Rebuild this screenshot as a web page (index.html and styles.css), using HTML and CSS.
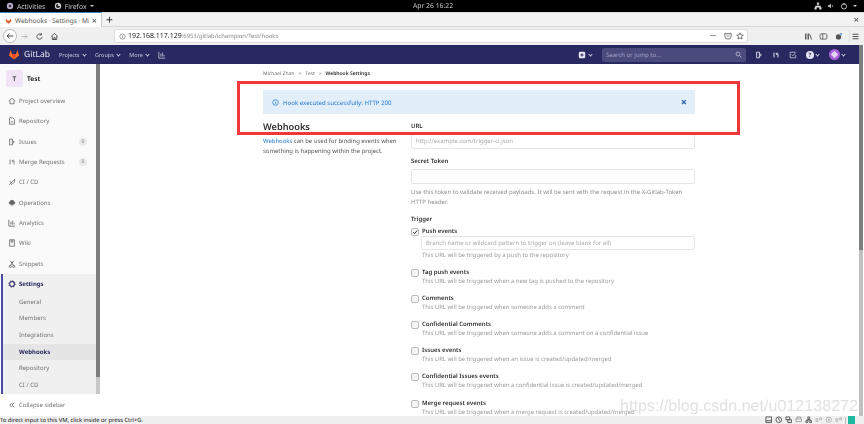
FILE: index.html
```html
<!DOCTYPE html>
<html lang="en">
<head>
    <meta charset="UTF-8">
    <title>Webhooks · Settings</title>
    <link rel="stylesheet" href="styles.css">
</head>
<body>
    <div class="os-bar">
        <div class="os-left">
            <svg class="os-icon" viewBox="0 0 10 10"><circle cx="5" cy="5" r="4" fill="#b9a6c9"/><circle cx="5" cy="5" r="1.600" fill="#333"/></svg>
            <span>Activities</span>
            <svg class="os-icon firefox" viewBox="0 0 10 10"><circle cx="5" cy="5" r="4" fill="#ccc"/><path d="M5 2.500a2.500 2.500 0 1 0 2.500 2.500H5z" fill="#222"/></svg>
            <span>Firefox</span>
            <span class="caret"></span>
        </div>
        <div class="os-clock">Apr 26 16:22</div>
        <div class="os-right">
            <svg class="os-icon" viewBox="0 0 10 10"><path d="M4 1h2v2H4zM1 7h2v2H1zM7 7h2v2H7zM5 3v2M2 7V5h6v2" fill="#ddd" stroke="#ddd" stroke-width=".7"/></svg>
            <svg class="os-icon" viewBox="0 0 10 10"><path d="M1 4h2l2-2v6L3 6H1z" fill="#ccc"/><path d="M6.500 3.500a2 2 0 0 1 0 3" stroke="#999" fill="none"/></svg>
            <svg class="os-icon" viewBox="0 0 10 10"><circle cx="5" cy="5.500" r="3.300" fill="none" stroke="#ddd"/><path d="M5 1v3" stroke="#ddd"/></svg>
            <span class="caret"></span>
        </div>
    </div>

    <div class="tab-bar">
        <div class="tab">
            <svg class="tab-icon" viewBox="0 0 10 10"><path d="M5 9.500 1 6l.800-4.500L3 5h4l1.200-3.500L9 6z" fill="#e2592a"/></svg>
            <span class="tab-title">Webhooks · Settings · Mi</span>
            <span class="tab-close">×</span>
        </div>
        <span class="new-tab">+</span>
        <span class="win-close">×</span>
    </div>

    <div class="url-bar">
        <span class="back">
            <svg viewBox="0 0 12 12"><path d="M10 6H2.500M5.500 3 2.500 6l3 3" fill="none" stroke="#333" stroke-width="1.100"/></svg>
        </span>
        <svg class="tool muted" viewBox="0 0 12 12"><path d="M2 6h7.500M6.500 3l3 3-3 3" fill="none" stroke="#aaa" stroke-width="1"/></svg>
        <svg class="tool" viewBox="0 0 12 12"><path d="M9.500 6.500A3.500 3.500 0 1 1 8 3.200M8.500 1.500v2.500H6" fill="none" stroke="#333" stroke-width="1"/></svg>
        <svg class="tool" viewBox="0 0 12 12"><path d="M1.500 6 6 2l4.500 4M3 5.500V10h6V5.500M5 10V7.500h2V10" fill="none" stroke="#333" stroke-width="1"/></svg>
        <div class="url-box">
            <svg class="info" viewBox="0 0 10 10"><circle cx="5" cy="5" r="3.800" fill="none" stroke="#555" stroke-width=".8"/><path d="M5 4.500v2.500M5 3v.8" stroke="#555" stroke-width=".8"/></svg>
            <span class="url-host">192.168.117.129</span><span class="url-path">:6953/gitlab/ichampion/Test/hooks</span>
            <span class="url-dots">···</span>
            <svg class="url-icon" viewBox="0 0 10 10"><path d="M1 2h8v3a4 4 0 0 1-8 0z" fill="none" stroke="#444" stroke-width=".9"/><path d="m3.200 4 1.800 1.600L6.800 4" fill="none" stroke="#444" stroke-width=".9"/></svg>
            <svg class="url-icon" viewBox="0 0 10 10"><path d="m5 1 1.200 2.700 2.900.3-2.200 1.900.7 2.900L5 7.300 2.400 8.800l.7-2.900L.9 4l2.900-.3z" fill="none" stroke="#444" stroke-width=".9"/></svg>
        </div>
        <div class="browser-tools">
            <svg class="tool" viewBox="0 0 12 12"><path d="M2 2v8M4 2v8M6 2v8M7.500 2.500l2.500 7.500" fill="none" stroke="#444" stroke-width="1.100"/></svg>
            <svg class="tool" viewBox="0 0 12 12"><rect x="1.500" y="2.500" width="9" height="7" rx="1.500" fill="none" stroke="#444"/><path d="M5 2.500v7" stroke="#444"/></svg>
            <svg class="tool" viewBox="0 0 12 12"><circle cx="6" cy="6.500" r="3.500" fill="#555"/><circle cx="9.500" cy="2.500" r="1.300" fill="#3a8ee6"/></svg>
            <span class="tool-sep"></span>
            <svg class="tool" viewBox="0 0 12 12"><path d="M2 3h8M2 6h8M2 9h8" stroke="#333" stroke-width="1.100"/></svg>
        </div>
    </div>

    <div class="page">
        <div class="viewport">
            <header class="navbar">
                <div class="nav-left">
                    <svg class="logo" viewBox="0 0 12 12"><path d="M6 11.500 .5 7.200 2.300 1l1.500 4.500h4.400L9.700 1l1.800 6.200z" fill="#fc6d26"/><path d="M6 11.500 3.800 5.500h4.400z" fill="#e24329"/></svg>
                    <span class="brand">GitLab</span>
                    <span class="nav-link">Projects <i class="chev"></i></span>
                    <span class="nav-link">Groups <i class="chev"></i></span>
                    <span class="nav-link">More <i class="chev"></i></span>
                    <svg class="nav-icon" viewBox="0 0 10 10"><path d="M1 1v8h8M3.500 7V3.500M5.500 7V2M7.500 7V4.500" fill="none" stroke="#c5c5de" stroke-width="1"/></svg>
                </div>
                <div class="nav-right">
                    <svg class="nav-icon plus" viewBox="0 0 10 10"><rect x="1" y="1" width="8" height="8" rx="1.500" fill="#e6e6f2"/><path d="M5 3v4M3 5h4" stroke="#292961" stroke-width="1.200"/></svg>
                    <i class="chev plus-chev"></i>
                    <div class="search">Search or jump to...
                        <svg class="search-icon" viewBox="0 0 10 10"><circle cx="4.300" cy="4.300" r="2.800" fill="none" stroke="#c5c5de" stroke-width="1.100"/><path d="m6.500 6.500 2.500 2.500" stroke="#c5c5de" stroke-width="1.200"/></svg>
                    </div>
                    <svg class="nav-icon" viewBox="0 0 10 10"><path d="M2 1.500h3.500v7H2zM5.500 3 8 5 5.500 7" fill="none" stroke="#e6e6f2" stroke-width="1.100"/></svg>
                    <svg class="nav-icon" viewBox="0 0 10 10"><path d="M2.500 2v6M7.500 8V3.500H5.500M6.500 2 5 3.500 6.500 5" fill="none" stroke="#e6e6f2" stroke-width="1.200"/></svg>
                    <svg class="nav-icon" viewBox="0 0 10 10"><path d="M8 1.500H1.500v7h7V5M3.500 4.500 5 6l3.500-4" fill="none" stroke="#c5c5de" stroke-width="1"/></svg>
                    <span class="help">?</span><i class="chev"></i>
                    <svg class="avatar" viewBox="0 0 12 12"><circle cx="6" cy="6" r="6" fill="#a55fd8"/><path d="M6 2 10 6 6 10 2 6z" fill="#e4d4f4"/></svg><i class="chev"></i>
                </div>
            </header>

            <div class="layout">
                <aside class="sidebar">
                    <div class="side-scroll">
                        <div class="side-list">
                            <div class="project"><span class="project-avatar">T</span><strong>Test</strong></div>
                            <ul class="side-menu">
                                <li><svg viewBox="0 0 10 10"><path d="M1 5 5 1.500 9 5M2.500 4.500V8.500h5V4.500" fill="none" stroke="#666"/></svg>Project overview</li>
                                <li><svg viewBox="0 0 10 10"><path d="M2 1h4l2 2v6H2zM3.500 6h3" fill="none" stroke="#666"/></svg>Repository</li>
                                <li><svg viewBox="0 0 10 10"><path d="M2 1.500h3.500v7H2zM5.500 3 8 5 5.500 7" fill="none" stroke="#666"/></svg>Issues<span class="count">0</span></li>
                                <li><svg viewBox="0 0 10 10"><path d="M2.500 2v6M7.500 8V3.500H5.500M6.500 2 5 3.500 6.500 5" fill="none" stroke="#666"/></svg>Merge Requests<span class="count">0</span></li>
                                <li><svg viewBox="0 0 10 10"><path d="M3 7 8.500 1.500 8 5 5 8zM1.500 8.500 3 7M2 5h2" fill="none" stroke="#666"/></svg>CI / CD</li>
                                <li><svg viewBox="0 0 10 10"><path d="M2.500 6.500a2 2 0 0 1 0-3.500 3 3 0 0 1 5 0 2 2 0 0 1 0 3.500zM5 6v3" fill="#666" stroke="#666"/></svg>Operations</li>
                                <li><svg viewBox="0 0 10 10"><path d="M1 1v8h8M3.500 7V3.500M5.500 7V2M7.500 7V4.500" fill="none" stroke="#666"/></svg>Analytics</li>
                                <li><svg viewBox="0 0 10 10"><path d="M2 1h6v8H2zM4 1v3h2V1" fill="none" stroke="#666"/></svg>Wiki</li>
                                <li><svg viewBox="0 0 10 10"><path d="m3 1 3.500 5.500M7 1 3.500 6.500" stroke="#555" stroke-width="1"/><circle cx="2.800" cy="8" r="1.300" fill="none" stroke="#555"/><circle cx="7.200" cy="8" r="1.300" fill="none" stroke="#555"/></svg>Snippets</li>
                            </ul>
                            <div class="side-active">
                                <div class="side-head"><svg viewBox="0 0 10 10"><circle cx="5" cy="5" r="3" fill="none" stroke="#292961" stroke-width="1.300"/><circle cx="5" cy="5" r="3.900" fill="none" stroke="#292961" stroke-width="1.200" stroke-dasharray="1.500 1.560"/></svg>Settings</div>
                                <ul class="side-sub">
                                    <li>General</li>
                                    <li>Members</li>
                                    <li>Integrations</li>
                                    <li class="current">Webhooks</li>
                                    <li>Repository</li>
                                    <li>CI / CD</li>
                                </ul>
                            </div>
                        </div>
                        <div class="side-bar"></div>
                    </div>
                    <div class="collapse">
                        <svg viewBox="0 0 8 8"><path d="M4 1 1 4l3 3M7 1 4 4l3 3" fill="none" stroke="#555"/></svg>
                        Collapse sidebar
                    </div>
                </aside>

                <main class="content">
                    <div class="breadcrumb">
                        <span>Michael Zhan</span><span>&gt;</span><span>Test</span><span>&gt;</span><strong>Webhook Settings</strong>
                    </div>
                    <div class="flash">
                        <svg class="flash-icon" viewBox="0 0 10 10"><circle cx="5" cy="5" r="4" fill="none" stroke="#1f78d1" stroke-width="1"/><path d="M5 4.500V7.500M5 2.500v1" stroke="#1f78d1" stroke-width="1"/></svg>
                        <span>Hook executed successfully: HTTP 200</span>
                        <span class="flash-close">×</span>
                    </div>
                    <div class="columns">
                        <section class="intro">
                            <h4>Webhooks</h4>
                            <p><a>Webhooks</a> can be used for binding events when something is happening within the project.</p>
                        </section>
                        <form class="form">
                            <label class="field-label">URL</label>
                            <div class="input placeholder">http://example.com/trigger-ci.json</div>
                            <label class="field-label token">Secret Token</label>
                            <div class="input"></div>
                            <p class="help-text">Use this token to validate received payloads. It will be sent with the request in the X-Gitlab-Token HTTP header.</p>
                            <label class="field-label trigger">Trigger</label>

                            <div class="event">
                                <span class="check"><svg viewBox="0 0 8 8"><path d="m1.500 4 2 2 3.500-4" fill="none" stroke="#333" stroke-width="1.300"/></svg></span>
                                <div class="event-body">
                                    <strong>Push events</strong>
                                    <div class="input branch placeholder">Branch name or wildcard pattern to trigger on (leave blank for all)</div>
                                    <p>This URL will be triggered by a push to the repository</p>
                                </div>
                            </div>
                            <div class="event">
                                <span class="check"></span>
                                <div class="event-body"><strong>Tag push events</strong><p>This URL will be triggered when a new tag is pushed to the repository</p></div>
                            </div>
                            <div class="event">
                                <span class="check"></span>
                                <div class="event-body"><strong>Comments</strong><p>This URL will be triggered when someone adds a comment</p></div>
                            </div>
                            <div class="event">
                                <span class="check"></span>
                                <div class="event-body"><strong>Confidential Comments</strong><p>This URL will be triggered when someone adds a comment on a confidential issue</p></div>
                            </div>
                            <div class="event">
                                <span class="check"></span>
                                <div class="event-body"><strong>Issues events</strong><p>This URL will be triggered when an issue is created/updated/merged</p></div>
                            </div>
                            <div class="event">
                                <span class="check"></span>
                                <div class="event-body"><strong>Confidential Issues events</strong><p>This URL will be triggered when a confidential issue is created/updated/merged</p></div>
                            </div>
                            <div class="event">
                                <span class="check"></span>
                                <div class="event-body"><strong>Merge request events</strong><p>This URL will be triggered when a merge request is created/updated/merged</p></div>
                            </div>
                        </form>
                    </div>
                </main>
            </div>
        </div>
        <div class="page-scroll"></div>
    </div>

    <div class="vm-bar">
        <span>To direct input to this VM, click inside or press Ctrl+G.</span>
        <div class="vm-icons">
            <svg viewBox="0 0 8 8"><path d="M1 1h6v6H1zM1 5h6" fill="none" stroke="#444" stroke-width=".9"/></svg>
            <svg viewBox="0 0 8 8"><circle cx="4" cy="4" r="3" fill="none" stroke="#444" stroke-width=".9"/><path d="M4 2v2l1.500 1" fill="none" stroke="#444" stroke-width=".8"/></svg>
            <svg viewBox="0 0 8 8"><path d="M1 1h4v3H1zM3 4h4v3H3z" fill="none" stroke="#444" stroke-width=".9"/></svg>
            <svg viewBox="0 0 8 8"><path d="M2 3V1h4v2M1 3h6v3H1z" fill="none" stroke="#999" stroke-width=".9"/></svg>
            <svg viewBox="0 0 8 8"><path d="M3 1h2v2H3zM1 5h2v2H1zM5 5h2v2H5zM4 3v2M2 5V4h4v1" fill="none" stroke="#444" stroke-width=".8"/></svg>
            <svg viewBox="0 0 8 8"><path d="M1 3h2v3H1zM5 2h2v2H5z" fill="none" stroke="#aaa" stroke-width=".8"/></svg>
            <svg viewBox="0 0 8 8"><circle cx="4" cy="4" r="2.800" fill="none" stroke="#aaa" stroke-width=".9"/><circle cx="4" cy="4" r="1" fill="#aaa"/></svg>
            <svg viewBox="0 0 8 8"><path d="M1 3h2v3H1zM5 2h2v2H5z" fill="none" stroke="#aaa" stroke-width=".8"/></svg>
            <span class="vm-sep"></span>
            <b></b>
        </div>
    </div>

    <div class="highlight"></div>
    <div class="watermark">https://blog.csdn.net/u012138272</div>
</body>
</html>
```

FILE: styles.css
```css
* {
    box-sizing: border-box;
}
html, body {
    margin: 0;
    padding: 0;
    width: 864px;
    height: 424px;
    overflow: hidden;
}
body {
    display: flex;
    flex-direction: column;
    position: relative;
    background: #fff;
    font-family: "Noto Sans", "Open Sans", sans-serif;
    font-size: 6px;
    color: #2e2e2e;
    text-rendering: geometricPrecision;
    filter: blur(.4px);
}
svg {
    display: block;
    flex: none;
}

/* desktop top bar */
.os-bar {
    height: 12px;
    flex: none;
    background: #000;
    color: #ccc;
    display: flex;
    align-items: center;
    justify-content: space-between;
    padding: 0 7px 0 6px;
    font-size: 6.800px;
    position: relative;
}
.os-left, .os-right {
    display: flex;
    align-items: center;
    gap: 3px;
}
.os-right {
    gap: 5px;
}
.os-icon {
    width: 8px;
    height: 8px;
}
.firefox {
    margin-left: 5.500px;
}
.caret {
    width: 0;
    height: 0;
    border: 2.500px solid transparent;
    border-top-color: #ccc;
    border-bottom: none;
}
.os-clock {
    position: absolute;
    left: 413px;
    top: 1px;
}

/* firefox chrome */
.tab-bar {
    height: 15px;
    flex: none;
    background: #f2f2f2;
    border-top: 1px solid #ddd;
    border-bottom: 1px solid #d6d6d6;
    display: flex;
    align-items: center;
}
.tab {
    width: 102px;
    height: 15px;
    background: #fff;
    border-top: 1px solid #3d7fc4;
    border-right: 1px solid #ccc;
    display: flex;
    align-items: center;
    padding: 0 4px 0 5px;
    gap: 3px;
    font-size: 6.500px;
    color: #555;
}
.tab-icon {
    width: 7px;
    height: 7px;
}
.tab-title {
    flex: 1;
    overflow: hidden;
    white-space: nowrap;
}
.tab-close, .win-close {
    font-size: 9px;
    line-height: 1;
    color: #333;
}
.new-tab {
    margin-left: 4px;
    font-size: 12px;
    line-height: 1;
    color: #333;
}
.win-close {
    margin-left: auto;
    margin-right: 5px;
}
.url-bar {
    height: 18px;
    flex: none;
    background: #f0f0f0;
    display: flex;
    align-items: center;
    padding: 0 4px 0 3px;
}
.back {
    width: 14px;
    height: 14px;
    border: 1px solid #bbb;
    border-radius: 50%;
    background: #fff;
    padding: 1px;
    margin-right: 3px;
}
.tool {
    width: 9px;
    height: 9px;
    margin-right: 6px;
}
.url-box {
    flex: 1;
    min-width: 0;
    height: 14px;
    background: #fff;
    border: 1px solid #ddd;
    border-radius: 2px;
    margin-left: 49px;
    display: flex;
    align-items: center;
    padding: 0 3px 0 3.500px;
    font-size: 7px;
}
.info {
    width: 7px;
    height: 7px;
    margin-right: 2.500px;
}
.url-host {
    color: #222;
}
.url-path {
    color: #888;
    font-size: 5.900px;
}
.url-dots {
    margin-left: auto;
    margin-right: 4px;
    font-weight: 700;
    color: #444;
}
.url-icon {
    width: 8px;
    height: 8px;
    margin-left: 4px;
}
.browser-tools {
    display: flex;
    align-items: center;
    margin-left: 56px;
}
.browser-tools .tool:last-child {
    margin-right: 0;
}
.tool-sep {
    width: 1px;
    height: 12px;
    background: #ddd;
    margin-right: 1px;
}

/* page */
.page {
    flex: 1;
    min-height: 0;
    display: flex;
}
.viewport {
    flex: 1;
    min-width: 0;
    display: flex;
    flex-direction: column;
}
.page-scroll {
    width: 4px;
    margin-right: 1px;
    background: linear-gradient(#7a7f7f 0 205px, #c0c0c0 205px);
}
.navbar {
    height: 19px;
    flex: none;
    background: #292961;
    color: #c5c5de;
    display: flex;
    align-items: center;
    justify-content: space-between;
    padding: 0 14px 0 8px;
}
.nav-left, .nav-right {
    display: flex;
    align-items: center;
}
.logo {
    width: 12px;
    height: 11px;
    margin-right: 4px;
}
.brand {
    font-size: 8.500px;
    color: #e6e6f2;
    margin-right: 9px;
}
.nav-link {
    font-size: 5.500px;
    margin-right: 9px;
}
.chev {
    display: inline-block;
    width: 3px;
    height: 3px;
    border-right: 1px solid #c5c5de;
    border-bottom: 1px solid #c5c5de;
    transform: rotate(45deg);
    margin: 0 0 1px 2px;
}
.nav-icon {
    width: 8px;
    height: 8px;
}
.plus-chev {
    margin-right: 10px;
}
.search {
    width: 144px;
    height: 14px;
    background: #4a4a7c;
    border-radius: 2px;
    padding: 0 4px;
    display: flex;
    align-items: center;
    justify-content: space-between;
    font-size: 6px;
    color: #a5a5c8;
    margin-right: 9px;
}
.search-icon {
    width: 7px;
    height: 7px;
}
.nav-right .nav-icon {
    margin-right: 9px;
}
.nav-right .plus {
    margin-right: 1px;
}
.help {
    width: 8px;
    height: 8px;
    border-radius: 50%;
    background: #e6e6f2;
    color: #292961;
    font-size: 6px;
    font-weight: 700;
    line-height: 8px;
    text-align: center;
}
.avatar {
    width: 11px;
    height: 11px;
    margin-left: 10px;
}

/* sidebar */
.layout {
    flex: 1;
    min-height: 0;
    display: flex;
}
.sidebar {
    width: 100px;
    flex: none;
    display: flex;
    flex-direction: column;
    background: #fafafa;
}
.side-scroll {
    flex: 1;
    min-height: 0;
    overflow: hidden;
    display: flex;
}
.side-list {
    flex: 1;
    min-width: 0;
}
.side-bar {
    width: 4px;
    flex: none;
    background: linear-gradient(#7d7d7d 0 313px, #c8c8c8 313px);
}
.project {
    height: 26px;
    display: flex;
    align-items: center;
    padding-left: 6px;
    gap: 4px;
    font-size: 6.500px;
    margin-top: 1px;
}
.project-avatar {
    width: 17px;
    height: 17px;
    background: #f0e4f6;
    border-radius: 2px;
    text-align: center;
    line-height: 17px;
    font-weight: 700;
    color: #555;
}
.side-menu, .side-sub {
    list-style: none;
    margin: 0;
    padding: 0;
}
.side-menu li {
    height: 20.300px;
    display: flex;
    align-items: center;
    padding: 0 9px 0 8px;
    color: #707070;
    gap: 3px;
}
.side-menu svg, .side-head svg {
    width: 8px;
    height: 8px;
}
.count {
    margin-left: auto;
    background: #eaeaea;
    color: #888;
    width: 8px;
    height: 8px;
    border-radius: 4px;
    text-align: center;
    line-height: 8px;
    font-size: 5px;
}
.side-active {
    border-left: 2px solid #4b4ba3;
    background: #f0f0f0;
    margin-left: 1px;
}
.side-head {
    height: 20px;
    display: flex;
    align-items: center;
    padding-left: 5px;
    gap: 3px;
    color: #292961;
    font-weight: 700;
}
.side-sub li {
    height: 16.700px;
    line-height: 16.700px;
    padding-left: 16px;
    color: #707070;
}
.side-sub .current {
    background: #e5e5e5;
    color: #292961;
    font-weight: 700;
}
.collapse {
    height: 22px;
    flex: none;
    display: flex;
    align-items: center;
    padding-left: 9px;
    gap: 4px;
    color: #707070;
    background: #fff;
}
.collapse svg {
    width: 6px;
    height: 6px;
}

/* content */
.content {
    flex: 1;
    min-width: 0;
    overflow: hidden;
    padding: 0 0 0 163px;
}
.breadcrumb {
    height: 26px;
    display: flex;
    align-items: center;
    gap: 4px;
    font-size: 5px;
    color: #707070;
    padding-bottom: 6px;
}
.breadcrumb strong {
    color: #2e2e2e;
    font-weight: 600;
}
.flash {
    width: 432px;
    height: 24px;
    background: #e2eefa;
    display: flex;
    align-items: center;
    padding: 0 8px 0 9px;
    gap: 4px;
    color: #1f78d1;
    font-size: 6.100px;
}
.flash-icon {
    width: 7px;
    height: 7px;
}
.flash-close {
    margin-left: auto;
    font-size: 11px;
    line-height: 1;
    font-weight: 700;
    color: #1f5fa5;
}
.columns {
    display: grid;
    grid-template-columns: 148px 284px;
    width: 432px;
}
.intro h4 {
    margin: 5.500px 0 3.500px;
    font-size: 9.200px;
    font-weight: 600;
    line-height: 13px;
}
.intro p {
    margin: 0;
    line-height: 10px;
    font-size: 5.950px;
    color: #555;
}
.intro a {
    color: #1f78d1;
}
.field-label {
    display: block;
    font-weight: 600;
    line-height: 8px;
    margin-top: 8px;
    margin-bottom: 4px;
}
.input {
    height: 15px;
    background: #fff;
    border: 1px solid #e5e5e5;
    border-radius: 2px;
    padding: 0 4px;
    line-height: 13px;
}
.placeholder {
    color: #a8a8a8;
}
.token {
    margin-top: 8px;
    margin-bottom: 4px;
}
.help-text {
    margin: 4px 0 0;
    line-height: 9.500px;
    color: #8c8c8c;
}
.trigger {
    margin-top: 8px;
    margin-bottom: 3.500px;
}
.event {
    display: flex;
    gap: 3px;
    margin-bottom: 8.200px;
}
.check {
    width: 8px;
    height: 8px;
    flex: none;
    border: 1px solid #bbb;
    border-radius: 2px;
    background: #f5f5f5;
    margin-top: 1px;
}
.event-body {
    flex: 1;
    min-width: 0;
}
.event-body strong {
    display: block;
    font-weight: 600;
    line-height: 9px;
}
.event-body p {
    margin: 0;
    line-height: 9px;
    font-size: 5.920px;
    color: #9a9a9a;
}
.branch {
    margin: .5px 0 .5px -1px;
    height: 14px;
    line-height: 12px;
}

/* vm bar */
.vm-bar {
    height: 8px;
    flex: none;
    background: #f0f0f0;
    display: flex;
    align-items: center;
    justify-content: space-between;
    color: #111;
    font-size: 5.750px;
    padding-right: 9px;
    white-space: nowrap;
}
.vm-icons {
    display: flex;
    align-items: center;
    gap: 2.500px;
}
.vm-icons svg {
    width: 7.500px;
    height: 7.500px;
}
.vm-sep {
    width: 1px;
    height: 7px;
    background: #bbb;
}
.vm-icons b {
    width: 7px;
    height: 8px;
    background: #20b8a0;
}

/* annotation on top of the screenshot */
.highlight {
    position: absolute;
    left: 237px;
    top: 81px;
    width: 503px;
    height: 54px;
    border: 3px solid #f0383c;
}
.watermark {
    position: absolute;
    left: 620px;
    top: 396px;
    font-family: "Liberation Sans", sans-serif;
    font-size: 16.100px;
    line-height: 20px;
    color: rgba(200, 200, 200, .55);
    white-space: nowrap;
}
```
